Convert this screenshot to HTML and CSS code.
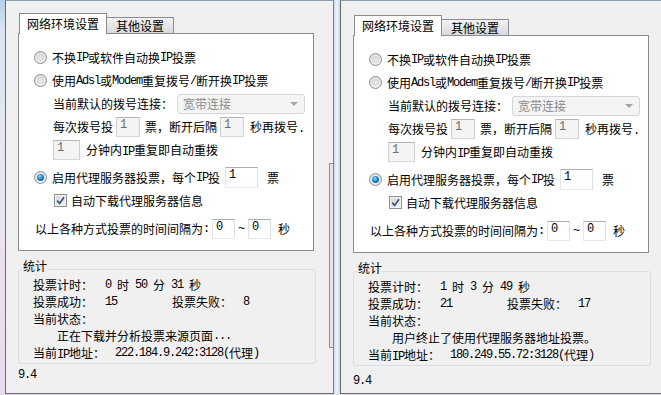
FILE: index.html
```html
<!DOCTYPE html>
<html lang="zh-CN">
<head>
    <meta charset="UTF-8">
    <meta name="viewport" content="width=device-width, initial-scale=1.0">
    <title>投票设置</title>
    <link rel="stylesheet" href="styles.css">
</head>
<body>
    <div class="screen">
        <!-- 左边的窗口 -->
        <div class="dlg dlg-left">
            <div class="main">
                <div class="tabs">
                    <div class="tab tab-on">网络环境设置</div>
                    <div class="tab tab-off">其他设置</div>
                </div>
                <div class="tabbody">
                    <div class="row opt"><span class="radio"></span>不换<span class="m">IP</span>或软件自动换<span class="m">IP</span>投票</div>
                    <div class="row opt"><span class="radio"></span>使用<span class="m">Adsl</span>或<span class="m">Modem</span>重复拨号<span class="m">/</span>断开换<span class="m">IP</span>投票</div>
                    <div class="row sub">当前默认的拨号连接：<span class="combo"><span class="combo-text">宽带连接</span><span class="arrow"></span></span></div>
                    <div class="row sub">每次拨号投<span class="inp inp-off w24 gl">1</span><span class="ml5">票，断开后隔</span><span class="inp inp-off w24 gl">1</span><span class="ml6">秒再拨号<span class="m">.</span></span></div>
                    <div class="row sub"><span class="inp inp-off w27">1</span><span class="ml6">分钟内<span class="m">IP</span>重复即自动重拨</span></div>
                    <div class="row opt gap5"><span class="radio radio-on"></span>启用代理服务器投票，每个<span class="m">IP</span>投<span class="inp w33 ml5">1</span><span class="ml9">票</span></div>
                    <div class="row chk"><span class="check"><svg width="9" height="9" viewBox="0 0 9 9"><path d="M1.2 4.6 L3.6 7.4 L8 1.2" fill="none" stroke="#3d5184" stroke-width="1.7"/></svg></span>自动下载代理服务器信息</div>
                    <div class="row gap5 wait">以上各种方式投票的时间间隔为<span class="m">:</span><span class="inp w23 gl">0</span><span class="m tilde">~</span><span class="inp w23">0</span><span class="ml7">秒</span></div>
                </div>
                <fieldset class="stats">
                    <legend>统计</legend>
                    <div class="srow"><span class="lab">投票计时：</span><span class="m">0 </span>时<span class="m"> 50 </span>分<span class="m"> 31 </span>秒</div>
                    <div class="srow"><span class="lab">投票成功：</span><span class="m val">15</span><span class="lab lab2">投票失败：</span><span class="m">8</span></div>
                    <div class="srow">当前状态：</div>
                    <div class="srow state">正在下载并分析投票来源页面<span class="m">...</span></div>
                    <div class="srow"><span class="lab">当前<span class="m">IP</span>地址：</span><span class="m ip">222.184.9.242:3128(</span>代理<span class="m">)</span></div>
                </fieldset>
                <div class="foot"><span class="m">9.4</span></div>
            </div>
            <div class="strip"></div>
        </div>

        <div class="gap"></div>

        <!-- 右边的窗口 -->
        <div class="dlg dlg-right">
            <div class="main">
                <div class="tabs">
                    <div class="tab tab-on">网络环境设置</div>
                    <div class="tab tab-off">其他设置</div>
                </div>
                <div class="tabbody">
                    <div class="row opt"><span class="radio"></span>不换<span class="m">IP</span>或软件自动换<span class="m">IP</span>投票</div>
                    <div class="row opt"><span class="radio"></span>使用<span class="m">Adsl</span>或<span class="m">Modem</span>重复拨号<span class="m">/</span>断开换<span class="m">IP</span>投票</div>
                    <div class="row sub">当前默认的拨号连接：<span class="combo"><span class="combo-text">宽带连接</span><span class="arrow"></span></span></div>
                    <div class="row sub">每次拨号投<span class="inp inp-off w24 gl">1</span><span class="ml5">票，断开后隔</span><span class="inp inp-off w24 gl">1</span><span class="ml6">秒再拨号<span class="m">.</span></span></div>
                    <div class="row sub"><span class="inp inp-off w27">1</span><span class="ml6">分钟内<span class="m">IP</span>重复即自动重拨</span></div>
                    <div class="row opt gap5"><span class="radio radio-on"></span>启用代理服务器投票，每个<span class="m">IP</span>投<span class="inp w33 ml5">1</span><span class="ml9">票</span></div>
                    <div class="row chk"><span class="check"><svg width="9" height="9" viewBox="0 0 9 9"><path d="M1.2 4.6 L3.6 7.4 L8 1.2" fill="none" stroke="#3d5184" stroke-width="1.7"/></svg></span>自动下载代理服务器信息</div>
                    <div class="row gap5 wait">以上各种方式投票的时间间隔为<span class="m">:</span><span class="inp w23 gl">0</span><span class="m tilde">~</span><span class="inp w23">0</span><span class="ml7">秒</span></div>
                </div>
                <fieldset class="stats">
                    <legend>统计</legend>
                    <div class="srow"><span class="lab">投票计时：</span><span class="m">1 </span>时<span class="m"> 3 </span>分<span class="m"> 49 </span>秒</div>
                    <div class="srow"><span class="lab">投票成功：</span><span class="m val">21</span><span class="lab lab2">投票失败：</span><span class="m">17</span></div>
                    <div class="srow">当前状态：</div>
                    <div class="srow state">用户终止了使用代理服务器地址投票。</div>
                    <div class="srow"><span class="lab">当前<span class="m">IP</span>地址：</span><span class="m ip">180.249.55.72:3128(</span>代理<span class="m">)</span></div>
                </fieldset>
                <div class="foot foot-r"><span class="m">9.4</span></div>
            </div>
        </div>
    </div>
</body>
</html>
```

FILE: styles.css
```css
body {
    margin: 0;
    width: 661px;
    height: 395px;
    overflow: hidden;
    font-family: "Noto Sans CJK SC", sans-serif;
    font-size: 12px;
    color: #000;
    background: linear-gradient(#b7cfe9 0, #d9e5f3 30px, #ebe6f2 180px, #e8d9ee 395px);
}

.screen {
    display: flex;
    height: 394px;
}

/* windows */
.dlg {
    display: flex;
    box-sizing: border-box;
    height: 394px;
    background-color: #f0f0f0;
    border-top: 1px solid #8d9caa;
    border-left: 1px solid #6b6b6b;
    border-bottom: 1px solid #6b6b6b;
}

.dlg-left {
    width: 329px;
    margin-left: 5px;
    border-right: 1px solid #7d7d7d;
}

.dlg-right {
    flex: 1;
}

.gap {
    width: 6px;
    background: linear-gradient(to right, #cddcee, #eef4fb 50%, #c6d7ec);
}

.main {
    display: flex;
    flex-direction: column;
    padding: 12px 0 0 12px;
}

.dlg-right .main {
    padding-top: 14px;
}

.strip {
    width: 3px;
    height: 183px;
    margin: 162px 0 0 auto;
    background-color: #e6e6e6;
    border: 1px solid #8f8f8f;
    border-right: none;
}

/* tabs */
.tabs {
    display: flex;
    align-items: flex-end;
    height: 20px;
    padding-left: 1px;
}

.tab {
    box-sizing: border-box;
    border: 1px solid #898c95;
    border-bottom: none;
    white-space: nowrap;
}

.tab-on {
    position: relative;
    z-index: 1;
    width: 88px;
    height: 21px;
    margin-bottom: -1px;
    padding: 2px 0 0 7px;
    line-height: 16px;
    background-color: #fff;
}

.tab-off {
    width: 67px;
    height: 16px;
    border-left: none;
    padding: 0 0 0 9px;
    line-height: 16px;
    background: linear-gradient(#f3f3f3, #e6e6e6 50%, #d9d9d9);
}

.tabbody {
    box-sizing: border-box;
    width: 296px;
    height: 218px;
    padding-top: 12px;
    background-color: #fff;
    border: 1px solid #898c95;
}

.row {
    display: flex;
    align-items: center;
    height: 23px;
    white-space: nowrap;
}

.opt {
    padding-left: 15px;
}

.sub {
    padding-left: 34px;
}

.chk {
    padding-left: 35px;
}

.wait {
    padding-left: 16px;
}

.gap5 {
    margin-top: 5px;
}

/* half-width latin, like the old bitmap font */
.m {
    font-family: "Liberation Mono", monospace;
    font-size: 12px;
    letter-spacing: -1.2px;
    white-space: pre;
}

.ml5 { margin-left: 5px; }
.ml6 { margin-left: 6px; }
.ml7 { margin-left: 7px; }
.ml9 { margin-left: 9px; }
.gl { margin-left: 3px; }

/* radio and checkbox */
.radio {
    position: relative;
    box-sizing: border-box;
    width: 13px;
    height: 13px;
    margin-right: 5px;
    border: 1px solid #8e8f8f;
    border-radius: 50%;
    background: radial-gradient(circle at 50% 60%, #fff 0, #f2f2f2 35%, #cfcfcf 100%);
}

.radio::after {
    content: "";
    position: absolute;
    left: 2px;
    top: 2px;
    width: 7px;
    height: 7px;
    border-radius: 50%;
    background: radial-gradient(circle at 50% 55%, #eeeeee, #c8c8c8);
}

.radio-on::after {
    background: radial-gradient(circle at 40% 35%, #8de0ff 0, #2a8fd4 40%, #0b3f7a 100%);
}

.check {
    box-sizing: border-box;
    display: flex;
    align-items: center;
    justify-content: center;
    width: 13px;
    height: 13px;
    margin-right: 4px;
    border: 1px solid #8e8f8f;
    background: linear-gradient(135deg, #d6d6d6, #f4f4f4);
    box-shadow: inset 0 0 0 1px #f4f4f4;
}

/* inputs */
.inp {
    box-sizing: border-box;
    height: 20px;
    padding: 0 0 0 3px;
    line-height: 15px;
    align-self: center;
    font-family: "Liberation Mono", monospace;
    font-size: 12px;
    letter-spacing: -1.2px;
    background-color: #fff;
    border: 1px solid;
    border-color: #abadb3 #dbdfe6 #e3e9ef #e2e3ea;
}

.inp-off {
    color: #6d6d6d;
    background-color: #f4f4f4;
    border-color: #b4b4b4 #d0d0d0 #d8d8d8 #cfcfcf;
}

.w23 { width: 23px; }
.w24 { width: 24px; }
.w27 { width: 27px; }
.w33 { width: 33px; height: 21px; }

.tilde {
    margin: 0 4px 0 3px;
}

.combo {
    box-sizing: border-box;
    display: flex;
    align-items: center;
    justify-content: space-between;
    width: 128px;
    height: 20px;
    margin-left: 4px;
    padding: 0 6px 0 5px;
    color: #8a8a8a;
    background-color: #f4f4f4;
    border: 1px solid #d6d6d6;
    border-radius: 3px;
}

.arrow {
    width: 0;
    height: 0;
    border-left: 4px solid transparent;
    border-right: 4px solid transparent;
    border-top: 4px solid #a5a5a5;
}

/* statistics box */
.stats {
    box-sizing: border-box;
    width: 298px;
    margin: 8px 0 0;
    padding: 0 0 2px 14px;
    border: 1px solid #d5dfe5;
    border-radius: 3px;
}

.stats legend {
    margin-left: -11px;
    padding: 0 1px 6px;
    line-height: 14px;
}

.srow {
    display: flex;
    align-items: center;
    height: 17px;
    white-space: nowrap;
}

.srow:first-of-type {
    margin-top: -3px;
}

.lab {
    width: 72px;
}

.lab2 {
    width: 71px;
}

.val {
    width: 67px;
}

.state {
    padding-left: 24px;
}

.ip {
    margin-left: 10px;
}

.foot {
    height: 17px;
    margin-top: 2px;
    display: flex;
    align-items: center;
}

.foot-r {
    margin-top: 6px;
}
```
